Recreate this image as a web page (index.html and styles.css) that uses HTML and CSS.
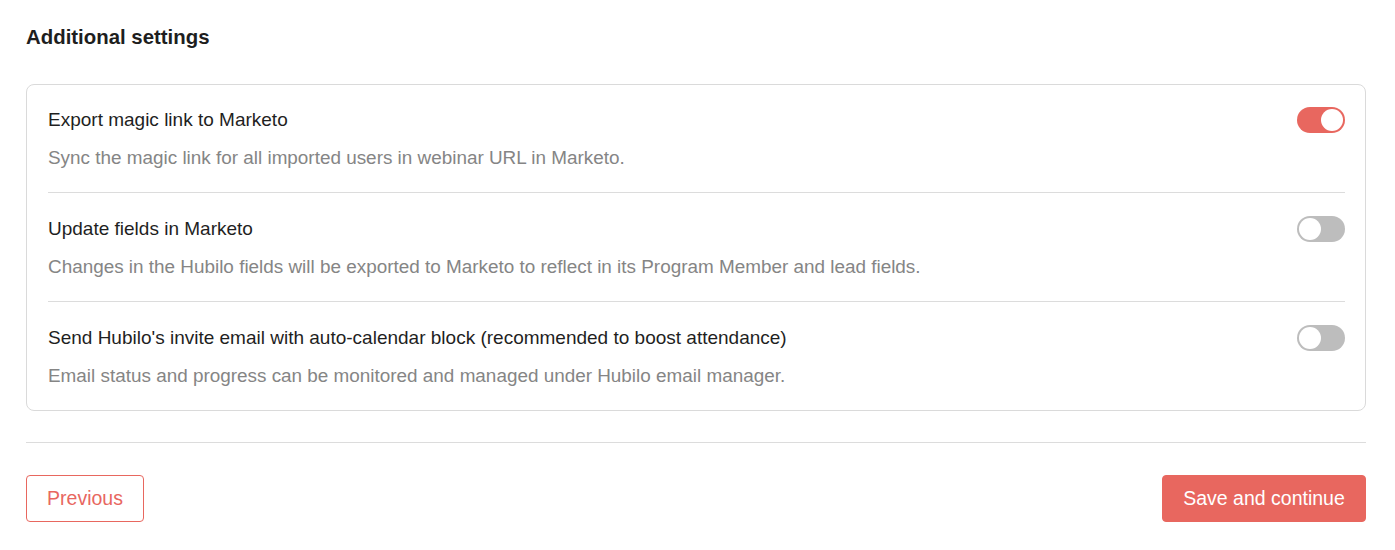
FILE: index.html
```html
<!DOCTYPE html>
<html lang="en">
<head>
<meta charset="utf-8">
<title>Additional settings</title>
<link rel="stylesheet" href="styles.css">
</head>
<body>
<main class="page">
  <h2 class="heading">Additional settings</h2>
  <section class="card">
    <div class="row">
      <div class="row-head">
        <span class="row-title">Export magic link to Marketo</span>
        <span class="toggle on"><span class="knob"></span></span>
      </div>
      <p class="row-desc">Sync the magic link for all imported users in webinar URL in Marketo.</p>
    </div>
    <div class="row">
      <div class="row-head">
        <span class="row-title">Update fields in Marketo</span>
        <span class="toggle"><span class="knob"></span></span>
      </div>
      <p class="row-desc">Changes in the Hubilo fields will be exported to Marketo to reflect in its Program Member and lead fields.</p>
    </div>
    <div class="row">
      <div class="row-head">
        <span class="row-title">Send Hubilo's invite email with auto-calendar block (recommended to boost attendance)</span>
        <span class="toggle"><span class="knob"></span></span>
      </div>
      <p class="row-desc">Email status and progress can be monitored and managed under Hubilo email manager.</p>
    </div>
  </section>
  <hr class="divider">
  <div class="actions">
    <button class="btn btn-outline">Previous</button>
    <button class="btn btn-primary">Save and continue</button>
  </div>
</main>
</body>
</html>
```
FILE: styles.css
```css
* { box-sizing: border-box; }
html, body { margin: 0; padding: 0; background: #fff; }
body {
  font-family: "Liberation Sans", Arial, Helvetica, sans-serif;
  color: #222;
}
.page {
  padding: 24px 29px 0 26px;
}
.heading {
  margin: 0 0 34px 0;
  font-size: 20.4px;
  line-height: 26px;
  font-weight: 600;
  color: #1e1e1e;
}
.card {
  border: 1px solid #dadada;
  border-radius: 8px;
  padding: 0 20px 0 21px;
}
.row {
  padding: 24px 0 22px 0;
  border-bottom: 1px solid #dcdcdc;
}
.row:first-child { padding-top: 23px; }
.row:last-child { border-bottom: none; }
.row-head {
  display: flex;
  align-items: center;
  justify-content: space-between;
  height: 24px;
}
.row-title {
  font-size: 19px;
  line-height: 24px;
  color: #1f1f1f;
}
.row-desc {
  margin: 14px 0 0 0;
  font-size: 18.9px;
  line-height: 24px;
  color: #858585;
}
.toggle {
  display: flex;
  align-items: center;
  width: 48px;
  height: 26px;
  border-radius: 13px;
  background: #bdbdbd;
  padding: 2px;
  flex-shrink: 0;
}
.toggle .knob {
  width: 22px;
  height: 22px;
  border-radius: 50%;
  background: #fff;
}
.toggle.on {
  background: #e8675f;
  justify-content: flex-end;
}
.divider {
  margin: 31px 0 0 0;
  border: none;
  border-top: 1px solid #dcdcdc;
  height: 0;
}
.actions {
  display: flex;
  justify-content: space-between;
  margin-top: 32px;
}
.btn {
  height: 47px;
  font-family: "Liberation Sans", Arial, Helvetica, sans-serif;
  font-size: 19.5px;
  border-radius: 4px;
  cursor: pointer;
  padding: 0;
}
.btn-outline {
  width: 118px;
  background: #fff;
  border: 1px solid #e8675f;
  color: #e8675f;
}
.btn-primary {
  width: 204px;
  background: #e8675f;
  border: 1px solid #e8675f;
  color: #fff;
}
```
